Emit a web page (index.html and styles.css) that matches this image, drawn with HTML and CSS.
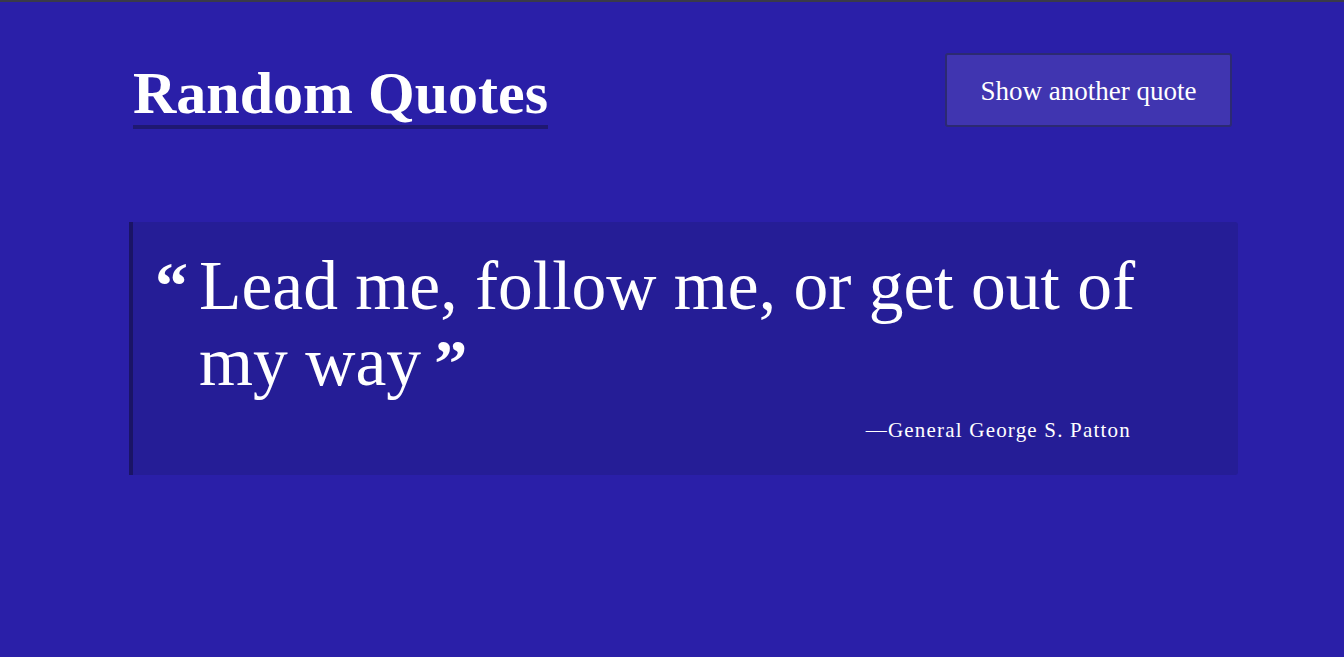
FILE: index.html
```html
<!DOCTYPE html>
<html lang="en">
<head>
<meta charset="utf-8">
<title>Random Quotes</title>
<link rel="stylesheet" href="styles.css">
</head>
<body>
<div class="page">
  <header class="header">
    <h1 class="title">Random Quotes</h1>
    <button class="btn" type="button">Show another quote</button>
  </header>
  <section class="quote-box">
    <div class="quote-row">
      <span class="open-mark">&ldquo;</span>
      <p class="quote-text">Lead me, follow me, or get out of my way&nbsp;<span class="close-mark">&rdquo;</span></p>
    </div>
    <p class="author">&mdash;General George S. Patton</p>
  </section>
</div>
</body>
</html>
```
FILE: styles.css
```css
html, body {
  margin: 0;
  padding: 0;
}
body {
  background: #2a1fa8;
  border-top: 2px solid #3a3a4a;
  min-height: 655px;
  font-family: "Liberation Serif", "DejaVu Serif", serif;
  color: #ffffff;
}
.page {
  width: 1109px;
  margin-left: 129px;
}
.header {
  display: flex;
  justify-content: space-between;
  align-items: flex-start;
  padding-top: 51px;
}
.title {
  margin: 8px 0 0 4px;
  font-size: 60px;
  font-weight: bold;
  line-height: 64px;
  border-bottom: 4px solid #1f1872;
  padding-bottom: 0;
}
.btn {
  margin-right: 6px;
  width: 287px;
  height: 74px;
  background: #4035b0;
  border: 2px solid #2c2a72;
  border-radius: 3px;
  color: #ffffff;
  font-family: "Liberation Serif", "DejaVu Serif", serif;
  font-size: 27px;
  padding: 2px 0 0;
}
.quote-box {
  margin-top: 93px;
  background: #251d96;
  border-left: 4px solid #1a1466;
  border-radius: 0 3px 3px 0;
  padding: 26px 90px 32px 22px;
}
.quote-row {
  display: flex;
  align-items: flex-start;
}
.open-mark {
  font-size: 66px;
  font-weight: bold;
  line-height: 76px;
  width: 44px;
  flex: none;
}
.quote-text {
  margin: 0;
  font-size: 69.5px;
  line-height: 76px;
}
.close-mark {
  display: inline-block;
  margin-left: -4px;
  font-size: 66px;
  font-weight: bold;
  line-height: 60px;
  vertical-align: baseline;
}
.author {
  margin: 18px 17px 0 0;
  text-align: right;
  font-size: 21px;
  letter-spacing: 1.2px;
}
```
